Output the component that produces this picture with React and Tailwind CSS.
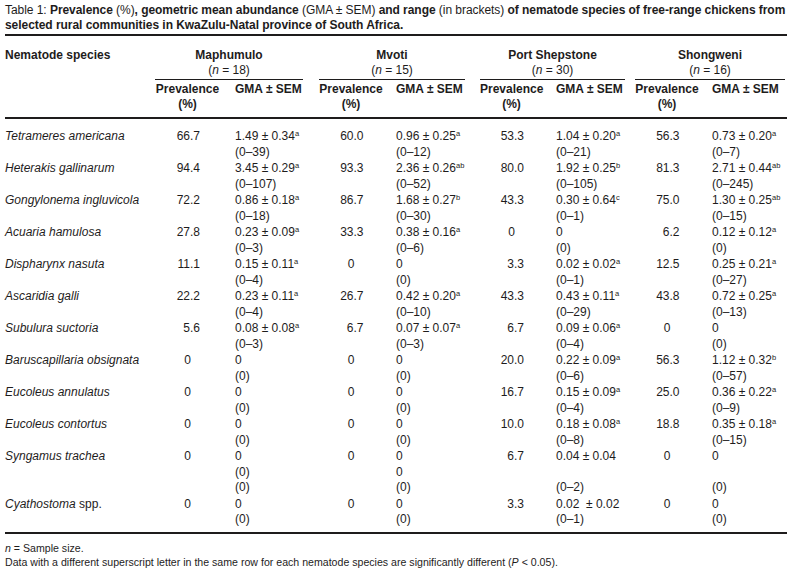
import React from "react";

// per group: name, n, padding class for the GMA column, right gap under the rule
const groups = [
  { name: "Maphumulo", n: 18, gap: "mr-[16px]", pad: "pl-[15px]" },
  { name: "Mvoti", n: 15, gap: "mr-[15px]", pad: "pl-[13px]" },
  { name: "Port Shepstone", n: 30, gap: "mr-[10px]", pad: "pl-[13px]" },
  { name: "Shongweni", n: 16, gap: "mr-0", pad: "pl-[13px]" },
];

const rows = [
  { name: "Tetrameres americana", cells: [
    ["66.7", ["1.49 ± 0.34^a", "(0–39)"]],
    ["60.0", ["0.96 ± 0.25^a", "(0–12)"]],
    ["53.3", ["1.04 ± 0.20^a", "(0–21)"]],
    ["56.3", ["0.73 ± 0.20^a", "(0–7)"]],
  ] },
  { name: "Heterakis gallinarum", cells: [
    ["94.4", ["3.45 ± 0.29^a", "(0–107)"]],
    ["93.3", ["2.36 ± 0.26^ab", "(0–52)"]],
    ["80.0", ["1.92 ± 0.25^b", "(0–105)"]],
    ["81.3", ["2.71 ± 0.44^ab", "(0–245)"]],
  ] },
  { name: "Gongylonema ingluvicola", cells: [
    ["72.2", ["0.86 ± 0.18^a", "(0–18)"]],
    ["86.7", ["1.68 ± 0.27^b", "(0–30)"]],
    ["43.3", ["0.30 ± 0.64^c", "(0–1)"]],
    ["75.0", ["1.30 ± 0.25^ab", "(0–15)"]],
  ] },
  { name: "Acuaria hamulosa", cells: [
    ["27.8", ["0.23 ± 0.09^a", "(0–3)"]],
    ["33.3", ["0.38 ± 0.16^a", "(0–6)"]],
    ["0", ["0", "(0)"]],
    ["6.2", ["0.12 ± 0.12^a", "(0)"]],
  ] },
  { name: "Dispharynx nasuta", cells: [
    ["11.1", ["0.15 ± 0.11^a", "(0–4)"]],
    ["0", ["0", "(0)"]],
    ["3.3", ["0.02 ± 0.02^a", "(0–1)"]],
    ["12.5", ["0.25 ± 0.21^a", "(0–27)"]],
  ] },
  { name: "Ascaridia galli", cells: [
    ["22.2", ["0.23 ± 0.11^a", "(0–4)"]],
    ["26.7", ["0.42 ± 0.20^a", "(0–10)"]],
    ["43.3", ["0.43 ± 0.11^a", "(0–29)"]],
    ["43.8", ["0.72 ± 0.25^a", "(0–13)"]],
  ] },
  { name: "Subulura suctoria", cells: [
    ["5.6", ["0.08 ± 0.08^a", "(0–3)"]],
    ["6.7", ["0.07 ± 0.07^a", "(0–3)"]],
    ["6.7", ["0.09 ± 0.06^a", "(0–4)"]],
    ["0", ["0", "(0)"]],
  ] },
  { name: "Baruscapillaria obsignata", cells: [
    ["0", ["0", "(0)"]],
    ["0", ["0", "(0)"]],
    ["20.0", ["0.22 ± 0.09^a", "(0–6)"]],
    ["56.3", ["1.12 ± 0.32^b", "(0–57)"]],
  ] },
  { name: "Eucoleus annulatus", cells: [
    ["0", ["0", "(0)"]],
    ["0", ["0", "(0)"]],
    ["16.7", ["0.15 ± 0.09^a", "(0–4)"]],
    ["25.0", ["0.36 ± 0.22^a", "(0–9)"]],
  ] },
  { name: "Eucoleus contortus", cells: [
    ["0", ["0", "(0)"]],
    ["0", ["0", "(0)"]],
    ["10.0", ["0.18 ± 0.08^a", "(0–8)"]],
    ["18.8", ["0.35 ± 0.18^a", "(0–15)"]],
  ] },
  { name: "Syngamus trachea", cells: [
    ["0", ["0", "(0)", "(0)"]],
    ["0", ["0", "0", "(0)"]],
    ["6.7", ["0.04 ± 0.04", "", "(0–2)"]],
    ["0", ["0", "", "(0)"]],
  ] },
  { name: "Cyathostoma", extra: " spp.", cells: [
    ["0", ["0", "(0)"]],
    ["0", ["0", "(0)"]],
    ["3.3", ["0.02\u00a0 ± 0.02", "(0–1)"]],
    ["0", ["0", "(0)"]],
  ] },
];

const cols = "grid grid-cols-[150px_65px_99px_64px_97px_63px_92px_64px_86px]";

function Gma({ text }) {
  if (!text) return <div>&nbsp;</div>;
  const [val, sup] = text.split("^");
  return (
    <div className="whitespace-pre">
      {val}
      {sup && <sup className="text-[7.5px] -top-[4px]">{sup}</sup>}
    </div>
  );
}

function Prev({ value }) {
  // decimals line up on the point, bare zeros sit in the middle
  if (value.includes(".")) {
    return <span className="inline-block w-[25px] text-right">{value}</span>;
  }
  return <span>{value}</span>;
}

export default function App() {
  return (
    <div className="bg-white w-[792px] h-[571px] px-[5px] text-[12px] leading-[15.5px] text-[#1e1c1c] font-['Liberation_Sans',Arial,sans-serif]">
      {/* Caption */}
      <p className="pt-[3px] leading-[14.5px] w-[780px] whitespace-nowrap tracking-[-0.05px]">
        Table 1: <b>Prevalence</b> (%)<b>, geometric mean abundance</b> (GMA ± SEM) <b>and range</b> (in brackets){" "}
        <b>of nematode species of free-range chickens from</b>
        <br />
        <b>selected rural communities in KwaZulu-Natal province of South Africa.</b>
      </p>

      <div className="mt-[2px] border-t-2 border-[#1e1c1c] border-b-2">
        {/* Header */}
        <div className={cols + " leading-[15px]"}>
          <div className="row-span-2 pt-[12px] font-bold">Nematode species</div>
          {groups.map((g) => (
            <div key={g.name} className="col-span-2">
              <div className={"pt-[12px] pb-[1px] text-center border-b border-[#1e1c1c] " + g.gap}>
                <div className="font-bold">{g.name}</div>
                <div>
                  (<i>n</i> = {g.n})
                </div>
              </div>
            </div>
          ))}
          {groups.map((g) => (
            <React.Fragment key={g.name}>
              <div className="pt-[2px] pb-[5px] text-center font-bold">
                Prevalence
                <br />
                (%)
              </div>
              <div className={"pt-[2px] pb-[5px] font-bold " + g.pad}>GMA ± SEM</div>
            </React.Fragment>
          ))}
        </div>
      </div>

      {/* Body */}
      <div className="pt-[10px] pb-[3px] border-b-2 border-[#1e1c1c]">
        {rows.map((r) => (
          <div key={r.name} className={cols + " pb-[1px]"}>
            <div>
              <i>{r.name}</i>
              {r.extra}
            </div>
            {r.cells.map(([prev, gma], i) => (
              <React.Fragment key={i}>
                <div className="text-center">
                  <Prev value={prev} />
                </div>
                <div className={groups[i].pad}>
                  {gma.map((line, j) => (
                    <Gma key={j} text={line} />
                  ))}
                </div>
              </React.Fragment>
            ))}
          </div>
        ))}
      </div>

      {/* Notes */}
      <div className="pt-[7px] text-[10.6px] leading-[14.5px]">
        <p>
          <i>n</i> = Sample size.
        </p>
        <p>
          Data with a different superscript letter in the same row for each nematode species are significantly different (
          <i>P</i> &lt; 0.05).
        </p>
      </div>
    </div>
  );
}
